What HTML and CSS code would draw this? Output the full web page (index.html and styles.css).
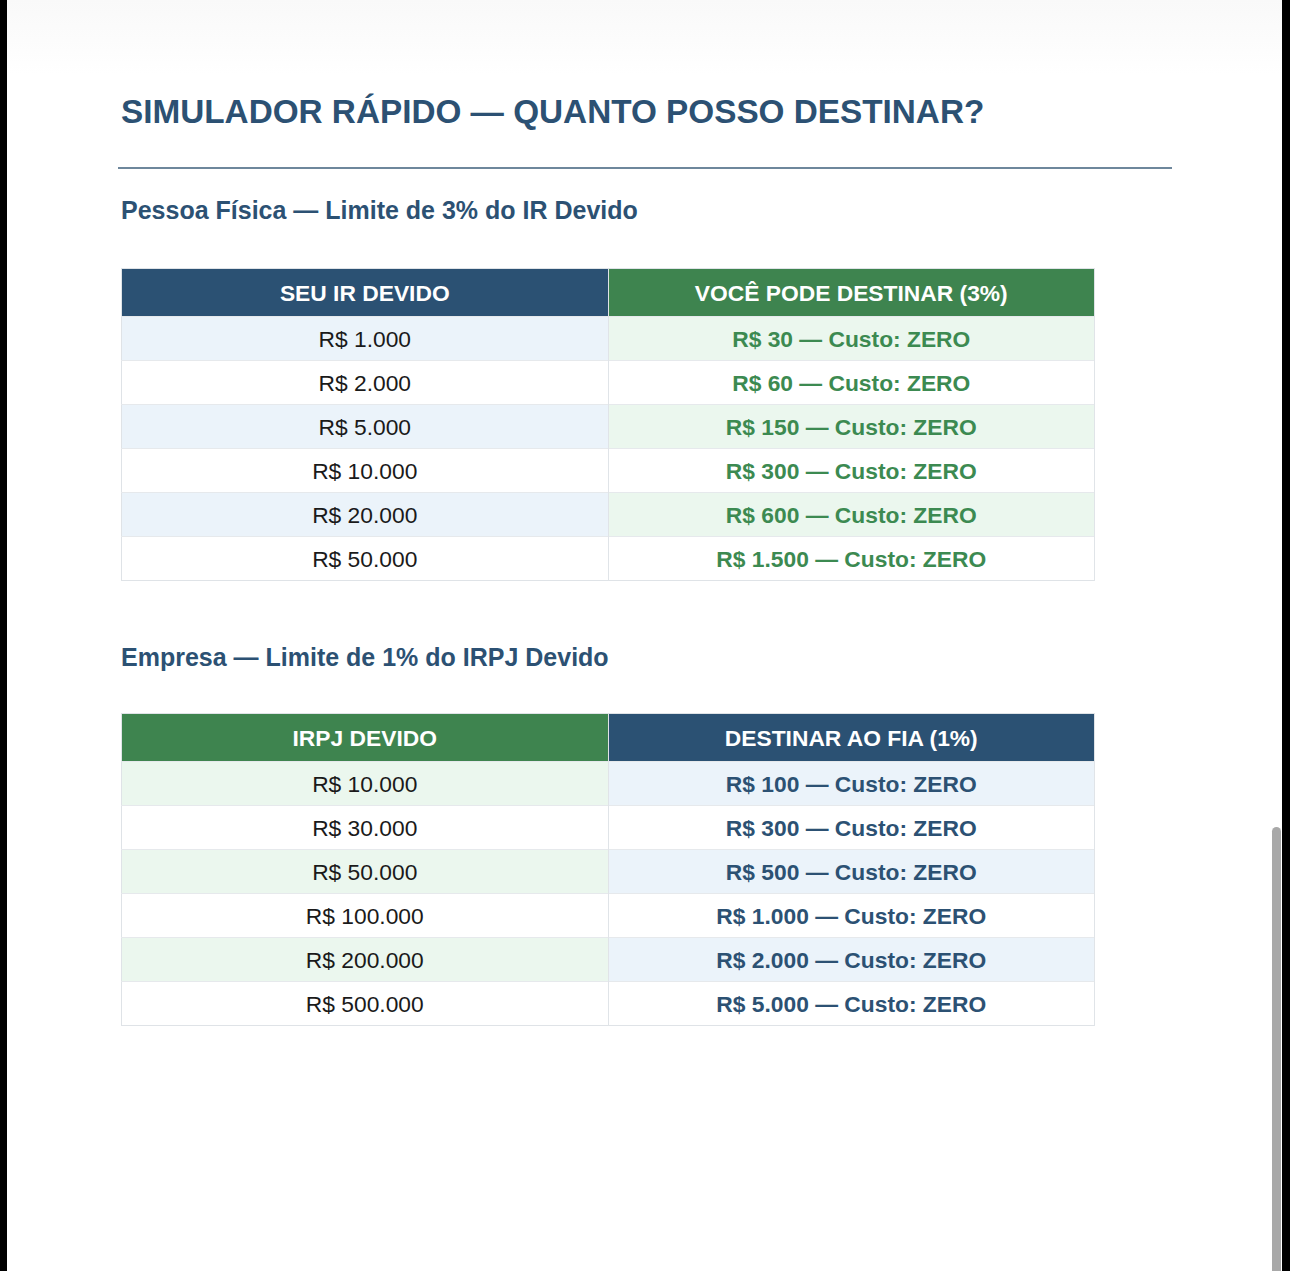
FILE: index.html
```html
<!DOCTYPE html>
<html lang="pt-BR">
<head>
<meta charset="utf-8">
<title>Simulador Rápido</title>
<link rel="stylesheet" href="styles.css">
</head>
<body>
<div class="frame">
  <div class="edge edge-left"></div>
  <main class="page">
    <section class="content">
      <h1 class="title">SIMULADOR RÁPIDO — QUANTO POSSO DESTINAR?</h1>
      <hr class="rule">

      <h2 class="subtitle">Pessoa Física — Limite de 3% do IR Devido</h2>
      <table class="sim sim-pf">
        <thead>
          <tr><th class="h-blue">SEU IR DEVIDO</th><th class="h-green">VOCÊ PODE DESTINAR (3%)</th></tr>
        </thead>
        <tbody>
          <tr class="alt"><td>R$ 1.000</td><td class="val">R$ 30 — Custo: ZERO</td></tr>
          <tr><td>R$ 2.000</td><td class="val">R$ 60 — Custo: ZERO</td></tr>
          <tr class="alt"><td>R$ 5.000</td><td class="val">R$ 150 — Custo: ZERO</td></tr>
          <tr><td>R$ 10.000</td><td class="val">R$ 300 — Custo: ZERO</td></tr>
          <tr class="alt"><td>R$ 20.000</td><td class="val">R$ 600 — Custo: ZERO</td></tr>
          <tr><td>R$ 50.000</td><td class="val">R$ 1.500 — Custo: ZERO</td></tr>
        </tbody>
      </table>

      <h2 class="subtitle subtitle-2">Empresa — Limite de 1% do IRPJ Devido</h2>
      <table class="sim sim-pj">
        <thead>
          <tr><th class="h-green">IRPJ DEVIDO</th><th class="h-blue">DESTINAR AO FIA (1%)</th></tr>
        </thead>
        <tbody>
          <tr class="alt"><td>R$ 10.000</td><td class="val">R$ 100 — Custo: ZERO</td></tr>
          <tr><td>R$ 30.000</td><td class="val">R$ 300 — Custo: ZERO</td></tr>
          <tr class="alt"><td>R$ 50.000</td><td class="val">R$ 500 — Custo: ZERO</td></tr>
          <tr><td>R$ 100.000</td><td class="val">R$ 1.000 — Custo: ZERO</td></tr>
          <tr class="alt"><td>R$ 200.000</td><td class="val">R$ 2.000 — Custo: ZERO</td></tr>
          <tr><td>R$ 500.000</td><td class="val">R$ 5.000 — Custo: ZERO</td></tr>
        </tbody>
      </table>
    </section>
    <div class="scroll-thumb"></div>
  </main>
  <div class="edge edge-right"></div>
</div>
</body>
</html>
```

FILE: styles.css
```css
html, body {
  margin: 0;
  padding: 0;
  background: #000;
}

body {
  font-family: "Liberation Sans", Arial, sans-serif;
  color: #1a1a1a;
}

.frame {
  display: flex;
  height: 1271px;
  overflow: hidden;
}

.edge {
  background: #000;
  flex: none;
}
.edge-left { width: 7px; }
.edge-right { width: 8px; }

.page {
  position: relative;
  flex: 1;
  background: linear-gradient(#f9f9f9 0, #fcfcfc 40px, #ffffff 75px);
}

.content {
  padding: 95px 0 0 114px;
  width: 974px;
}

.title {
  margin: 0;
  font-size: 33.3px;
  line-height: 1;
  font-weight: 700;
  color: #2c5173;
  white-space: nowrap;
}

.rule {
  margin: 39px 0 0 -3px;
  width: 1054px;
  height: 2px;
  border: 0;
  background: #6e879c;
}

.subtitle {
  margin: 29px 0 0 0;
  font-size: 25px;
  line-height: 1;
  font-weight: 700;
  color: #2c5173;
  white-space: nowrap;
}

.subtitle-2 {
  margin-top: 64px;
}

.sim {
  margin-top: 45px;
  width: 974px;
  border-collapse: collapse;
  table-layout: fixed;
  border: 1px solid #dfe3e7;
}

.sim-pj {
  margin-top: 43px;
}

.sim th,
.sim td {
  width: 50%;
  padding: 2px 0 0 0;
  text-align: center;
  vertical-align: middle;
  font-size: 22.8px;
}

.sim th {
  height: 45px;
  color: #ffffff;
  font-weight: 700;
  border-right: 1px solid #dfe3e7;
}

.sim td {
  height: 41px;
  border-top: 1px solid #e6e9ec;
  border-right: 1px solid #e0e4e8;
}

.h-blue { background: #2b5173; }
.h-green { background: #3e844f; }

.val { font-weight: 700; }

.sim-pf .val { color: #3c8a51; }
.sim-pf tr.alt td:first-child { background: #ebf3fa; }
.sim-pf tr.alt td.val { background: #ebf7ee; }

.sim-pj .val { color: #2c5173; }
.sim-pj tr.alt td:first-child { background: #ebf7ee; }
.sim-pj tr.alt td.val { background: #ebf3fa; }

.scroll-thumb {
  position: absolute;
  left: 1265px;
  top: 827px;
  width: 9px;
  height: 460px;
  border-radius: 5px;
  background: #a8a8a8;
}
```
